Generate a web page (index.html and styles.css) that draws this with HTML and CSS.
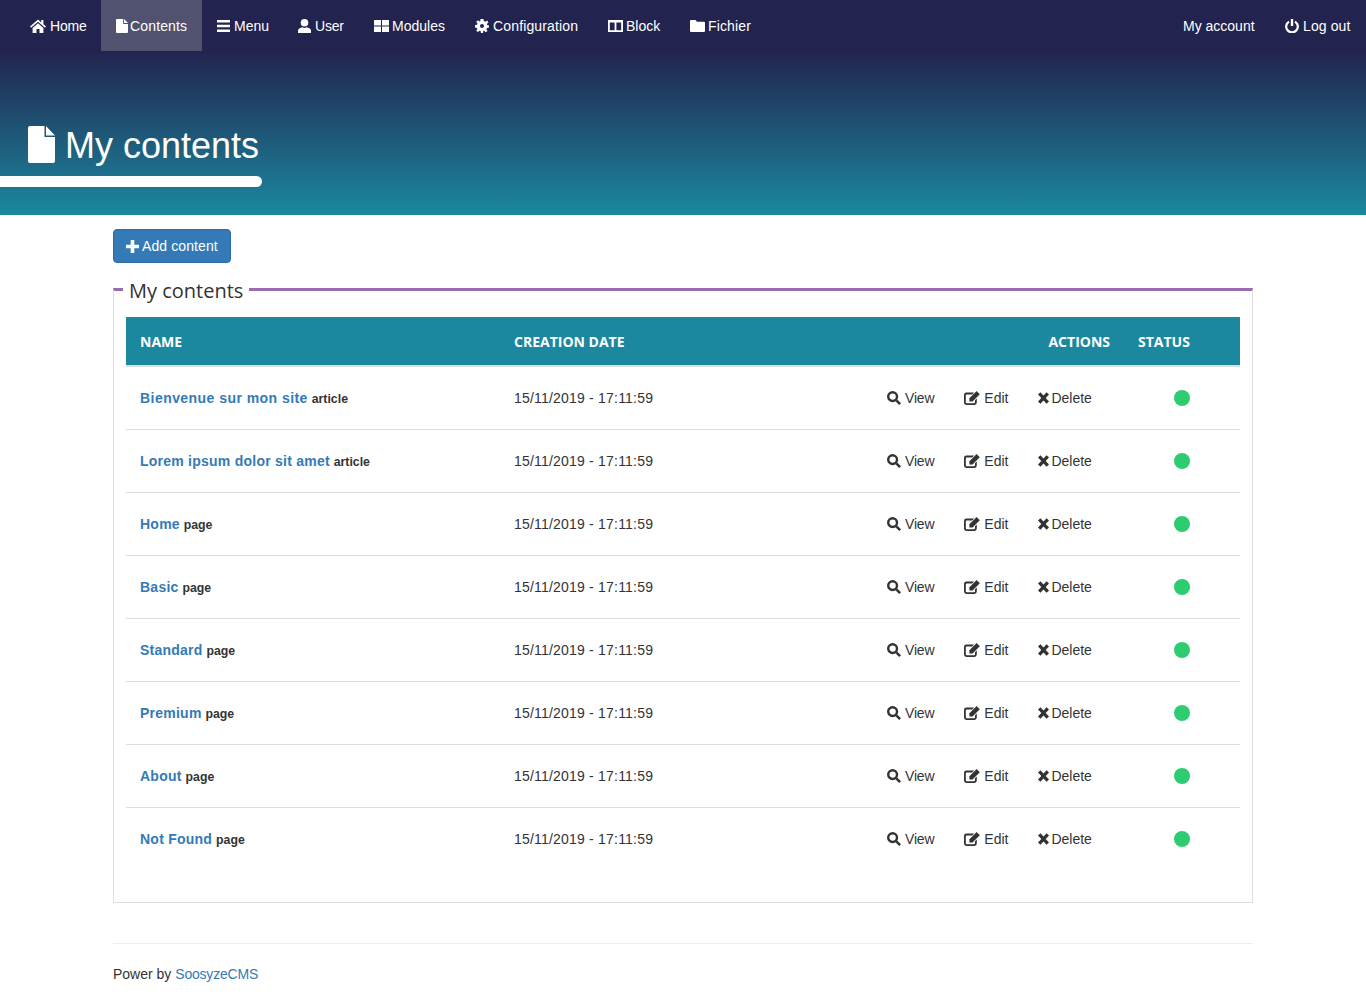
FILE: index.html
```html
<!DOCTYPE html>
<html lang="en">
<head>
    <meta charset="UTF-8">
    <meta name="viewport" content="width=device-width, initial-scale=1.0">
    <title>My contents</title>
    <link rel="stylesheet" href="styles.css">
</head>
<body>
    <svg class="sprite" xmlns="http://www.w3.org/2000/svg">
        <symbol id="i-home" viewBox="0 0 16 14"><path d="M8 0.6 L0 7.6 L1 8.8 L8 2.8 L15 8.8 L16 7.6 L13.4 5.3 V1 H11.2 V3.4 Z M8 4.2 L2.6 8.9 V14 H6.5 V10 H9.5 V14 H13.4 V8.9 Z"/></symbol>
        <symbol id="i-file" viewBox="0 0 12 14"><path d="M1 0 H7.2 V5 H12 V13 Q12 14 11 14 H1 Q0 14 0 13 V1 Q0 0 1 0 Z M8 0 L12 4 H8 Z"/></symbol>
        <symbol id="i-file-lg" viewBox="0 0 27 37"><path d="M2 0 H16.5 V11 H27 V35 Q27 37 25 37 H2 Q0 37 0 35 V2 Q0 0 2 0 Z M18 0 L27 9.5 H18 Z"/></symbol>
        <symbol id="i-menu" viewBox="0 0 13 14"><path d="M0 1 H13 V3.4 H0 Z M0 5.8 H13 V8.2 H0 Z M0 10.6 H13 V13 H0 Z"/></symbol>
        <symbol id="i-user" viewBox="0 0 13 14"><circle cx="6.5" cy="3.8" r="3.8"/><path d="M0 14 V11.4 Q0 9.4 2.2 8.9 L4.2 8.2 Q6.5 9.6 8.8 8.2 L10.8 8.9 Q13 9.4 13 11.4 V14 Z"/></symbol>
        <symbol id="i-modules" viewBox="0 0 15 14"><path d="M0 1 H7 V6.5 H0 Z M8 1 H15 V6.5 H8 Z M0 7.5 H7 V13 H0 Z M8 7.5 H15 V13 H8 Z"/></symbol>
        <symbol id="i-cog" viewBox="0 0 14 14"><path fill-rule="evenodd" d="M5.6 0 H8.4 L8.8 2 L10.4 2.7 L12.1 1.6 L13.4 3.6 L11.8 4.9 L12.1 6 L14 6.4 V8.4 L12 8.9 L11.4 10.3 L12.5 12 L10.6 13.2 L9.2 11.8 L8.2 12.1 L8 14 H6 L5.6 12.1 L4.4 11.7 L3 13.1 L1.2 11.8 L2.4 10.3 L1.9 8.9 L0 8.4 V6.2 L1.9 5.8 L2.5 4.5 L1.2 3 L3 1.3 L4.6 2.4 L5.3 2 Z M7 5 A2 2 0 1 0 7 9 A2 2 0 1 0 7 5 Z"/></symbol>
        <symbol id="i-block" viewBox="0 0 15 14"><path fill-rule="evenodd" d="M0 1 H15 V13 H0 Z M1.8 3.4 V11.2 H6.6 V3.4 Z M8.4 3.4 V11.2 H13.2 V3.4 Z"/></symbol>
        <symbol id="i-folder" viewBox="0 0 15 14"><path d="M1 1 H5.5 L7 2.8 H14 Q15 2.8 15 3.8 V12 Q15 13 14 13 H1 Q0 13 0 12 V2 Q0 1 1 1 Z"/></symbol>
        <symbol id="i-power" viewBox="0 0 14 14"><path d="M5.8 0 H8.2 V7 H5.8 Z"/><path fill="none" stroke="currentColor" stroke-width="2.2" d="M4 2.6 A5.8 5.8 0 1 0 10 2.6"/></symbol>
        <symbol id="i-plus" viewBox="0 0 13 13"><path d="M4.7 0 H8.3 V4.7 H13 V8.3 H8.3 V13 H4.7 V8.3 H0 V4.7 H4.7 Z"/></symbol>
        <symbol id="i-search" viewBox="0 0 14 14"><circle cx="5.6" cy="5.6" r="4.4" fill="none" stroke="currentColor" stroke-width="2.4"/><path d="M8.4 10.2 L10.2 8.4 L14 12.2 L12.2 14 Z"/></symbol>
        <symbol id="i-edit" viewBox="0 0 16 14"><path d="M2.4 1.6 H10 L8.2 3.4 H2.8 Q1.8 3.4 1.8 4.4 V11.2 Q1.8 12.2 2.8 12.2 H10 Q11 12.2 11 11.2 V9.2 L12.8 7.4 V11.6 Q12.8 14 10.4 14 H2.4 Q0 14 0 11.6 V4 Q0 1.6 2.4 1.6 Z"/><path d="M12.6 0 L15.8 3.2 L8.6 10.4 H5.4 V7.2 Z"/></symbol>
        <symbol id="i-remove" viewBox="0 0 11 14"><path d="M0 3.6 L2.4 1.2 L5.5 4.6 L8.6 1.2 L11 3.6 L7.7 7 L11 10.4 L8.6 12.8 L5.5 9.4 L2.4 12.8 L0 10.4 L3.3 7 Z"/></symbol>
    </svg>

    <header class="site-header">
        <nav class="navbar">
            <ul class="nav-list">
                <li class="nav-home"><a href="#"><svg class="icon icon-home"><use href="#i-home"/></svg>Home</a></li>
                <li class="nav-contents active"><a href="#"><svg class="icon icon-file"><use href="#i-file"/></svg>Contents</a></li>
                <li class="nav-menu"><a href="#"><svg class="icon icon-narrow"><use href="#i-menu"/></svg>Menu</a></li>
                <li class="nav-user"><a href="#"><svg class="icon icon-narrow"><use href="#i-user"/></svg>User</a></li>
                <li class="nav-modules"><a href="#"><svg class="icon icon-wide"><use href="#i-modules"/></svg>Modules</a></li>
                <li class="nav-config"><a href="#"><svg class="icon"><use href="#i-cog"/></svg>Configuration</a></li>
                <li class="nav-block"><a href="#"><svg class="icon icon-wide"><use href="#i-block"/></svg>Block</a></li>
                <li class="nav-fichier"><a href="#"><svg class="icon icon-wide"><use href="#i-folder"/></svg>Fichier</a></li>
            </ul>
            <ul class="nav-list">
                <li class="nav-account"><a href="#">My account</a></li>
                <li class="nav-logout"><a href="#"><svg class="icon"><use href="#i-power"/></svg>Log out</a></li>
            </ul>
        </nav>
        <div class="page-title">
            <h1><svg class="title-icon"><use href="#i-file-lg"/></svg>My contents</h1>
            <div class="title-bar"></div>
        </div>
    </header>

    <main class="container">
        <a class="btn-add" href="#"><svg class="icon icon-plus"><use href="#i-plus"/></svg>Add content</a>

        <fieldset class="panel">
            <legend>My contents</legend>
            <table class="content-table">
                <colgroup>
                    <col class="col-name">
                    <col class="col-date">
                    <col class="col-actions">
                    <col class="col-status">
                </colgroup>
                <thead>
                    <tr>
                        <th>NAME</th>
                        <th>CREATION DATE</th>
                        <th class="th-actions">ACTIONS</th>
                        <th>STATUS</th>
                    </tr>
                </thead>
                <tbody>
                    <tr>
                        <td><a class="title-link title-wide" href="#">Bienvenue sur mon site</a> <small>article</small></td>
                        <td class="td-date">15/11/2019 - 17:11:59</td>
                        <td>
                            <div class="actions">
                                <a href="#"><svg class="icon"><use href="#i-search"/></svg>View</a>
                                <a href="#"><svg class="icon icon-edit"><use href="#i-edit"/></svg>Edit</a>
                                <a href="#"><svg class="icon icon-x"><use href="#i-remove"/></svg>Delete</a>
                            </div>
                        </td>
                        <td class="td-status"><span class="dot"></span></td>
                    </tr>
                    <tr>
                        <td><a class="title-link" href="#">Lorem ipsum dolor sit amet</a> <small>article</small></td>
                        <td class="td-date">15/11/2019 - 17:11:59</td>
                        <td>
                            <div class="actions">
                                <a href="#"><svg class="icon"><use href="#i-search"/></svg>View</a>
                                <a href="#"><svg class="icon icon-edit"><use href="#i-edit"/></svg>Edit</a>
                                <a href="#"><svg class="icon icon-x"><use href="#i-remove"/></svg>Delete</a>
                            </div>
                        </td>
                        <td class="td-status"><span class="dot"></span></td>
                    </tr>
                    <tr>
                        <td><a class="title-link" href="#">Home</a> <small>page</small></td>
                        <td class="td-date">15/11/2019 - 17:11:59</td>
                        <td>
                            <div class="actions">
                                <a href="#"><svg class="icon"><use href="#i-search"/></svg>View</a>
                                <a href="#"><svg class="icon icon-edit"><use href="#i-edit"/></svg>Edit</a>
                                <a href="#"><svg class="icon icon-x"><use href="#i-remove"/></svg>Delete</a>
                            </div>
                        </td>
                        <td class="td-status"><span class="dot"></span></td>
                    </tr>
                    <tr>
                        <td><a class="title-link" href="#">Basic</a> <small>page</small></td>
                        <td class="td-date">15/11/2019 - 17:11:59</td>
                        <td>
                            <div class="actions">
                                <a href="#"><svg class="icon"><use href="#i-search"/></svg>View</a>
                                <a href="#"><svg class="icon icon-edit"><use href="#i-edit"/></svg>Edit</a>
                                <a href="#"><svg class="icon icon-x"><use href="#i-remove"/></svg>Delete</a>
                            </div>
                        </td>
                        <td class="td-status"><span class="dot"></span></td>
                    </tr>
                    <tr>
                        <td><a class="title-link" href="#">Standard</a> <small>page</small></td>
                        <td class="td-date">15/11/2019 - 17:11:59</td>
                        <td>
                            <div class="actions">
                                <a href="#"><svg class="icon"><use href="#i-search"/></svg>View</a>
                                <a href="#"><svg class="icon icon-edit"><use href="#i-edit"/></svg>Edit</a>
                                <a href="#"><svg class="icon icon-x"><use href="#i-remove"/></svg>Delete</a>
                            </div>
                        </td>
                        <td class="td-status"><span class="dot"></span></td>
                    </tr>
                    <tr>
                        <td><a class="title-link" href="#">Premium</a> <small>page</small></td>
                        <td class="td-date">15/11/2019 - 17:11:59</td>
                        <td>
                            <div class="actions">
                                <a href="#"><svg class="icon"><use href="#i-search"/></svg>View</a>
                                <a href="#"><svg class="icon icon-edit"><use href="#i-edit"/></svg>Edit</a>
                                <a href="#"><svg class="icon icon-x"><use href="#i-remove"/></svg>Delete</a>
                            </div>
                        </td>
                        <td class="td-status"><span class="dot"></span></td>
                    </tr>
                    <tr>
                        <td><a class="title-link" href="#">About</a> <small>page</small></td>
                        <td class="td-date">15/11/2019 - 17:11:59</td>
                        <td>
                            <div class="actions">
                                <a href="#"><svg class="icon"><use href="#i-search"/></svg>View</a>
                                <a href="#"><svg class="icon icon-edit"><use href="#i-edit"/></svg>Edit</a>
                                <a href="#"><svg class="icon icon-x"><use href="#i-remove"/></svg>Delete</a>
                            </div>
                        </td>
                        <td class="td-status"><span class="dot"></span></td>
                    </tr>
                    <tr>
                        <td><a class="title-link" href="#">Not Found</a> <small>page</small></td>
                        <td class="td-date">15/11/2019 - 17:11:59</td>
                        <td>
                            <div class="actions">
                                <a href="#"><svg class="icon"><use href="#i-search"/></svg>View</a>
                                <a href="#"><svg class="icon icon-edit"><use href="#i-edit"/></svg>Edit</a>
                                <a href="#"><svg class="icon icon-x"><use href="#i-remove"/></svg>Delete</a>
                            </div>
                        </td>
                        <td class="td-status"><span class="dot"></span></td>
                    </tr>
                </tbody>
            </table>
        </fieldset>

        <footer class="site-footer">
            Power by <a class="footer-link" href="#">SoosyzeCMS</a>
        </footer>
    </main>
</body>
</html>
```

FILE: styles.css
```css
* {
    box-sizing: border-box;
}
body {
    margin: 0;
    font-family: "Liberation Sans", Arial, sans-serif;
    font-size: 14px;
    line-height: 20px;
    color: #333;
    background-color: #fff;
}
a {
    text-decoration: none;
    color: #337ab7;
}
.sprite {
    display: none;
}
.icon {
    display: inline-block;
    width: 14px;
    height: 14px;
    margin-right: 4px;
    fill: currentColor;
    vertical-align: -2px;
}
.icon-home,
.icon-edit {
    width: 16px;
}
.icon-file {
    width: 12px;
    margin-right: 2px;
}
.icon-narrow {
    width: 13px;
}
.icon-wide {
    width: 15px;
    margin-right: 3px;
}
.icon-x {
    width: 11px;
    margin-right: 3px;
}
.icon-plus {
    width: 13px;
    height: 13px;
    margin-right: 3px;
}

/* header */
.site-header {
    height: 215px;
    background: linear-gradient(to bottom, #22244f 0, #22244f 51px, #1b889f 100%);
}
.navbar {
    display: flex;
    justify-content: space-between;
    padding-left: 15px;
    height: 51px;
}
.nav-list {
    display: flex;
    margin: 0;
    padding: 0;
    list-style: none;
}
.nav-list a {
    display: block;
    height: 51px;
    padding: 16px 0 15px 15px;
    white-space: nowrap;
    color: #fff;
}
.nav-list .active a {
    background-color: #50526f;
}
.nav-home { width: 86px; letter-spacing: -0.2px; }
.nav-contents { width: 101px; letter-spacing: 0.15px; }
.nav-menu { width: 81px; }
.nav-user { width: 76px; letter-spacing: -0.2px; }
.nav-modules { width: 101px; }
.nav-config { width: 133px; letter-spacing: 0.15px; }
.nav-block { width: 82px; }
.nav-fichier { width: 91px; letter-spacing: 0.15px; }
.nav-account { width: 102px; }
.nav-logout { width: 96px; letter-spacing: 0.1px; }

.page-title {
    padding-top: 70px;
}
.page-title h1 {
    margin: 0;
    padding-left: 28px;
    height: 55px;
    font-size: 36px;
    font-weight: 500;
    line-height: 50px;
    color: #fff;
}
.title-icon {
    width: 27px;
    height: 37px;
    margin-right: 10px;
    fill: #fff;
    vertical-align: -5px;
}
.title-bar {
    width: 262px;
    height: 11px;
    background-color: #fff;
    border-radius: 0 6px 6px 0;
}

/* main */
.container {
    width: 1140px;
    margin: 14px auto 0;
}
.btn-add {
    display: inline-block;
    width: 118px;
    height: 34px;
    padding: 6px 12px;
    letter-spacing: 0.1px;
    color: #fff;
    background-color: #337ab7;
    border: 1px solid #2e6da4;
    border-radius: 4px;
}
.btn-add .icon {
    vertical-align: -1.5px;
}
.panel {
    margin: 12px 0 0;
    padding: 13px 12px 0;
    height: 628px;
    min-width: 0;
    border: 1px solid #ddd;
    border-top: 3px solid #9b6bb0;
}
.panel legend {
    margin-left: -3px;
    padding: 2px 6px 0;
    font-family: "Open Sans", sans-serif;
    font-size: 20px;
    line-height: 27px;
    color: #333;
}

/* table */
.content-table {
    width: 100%;
    table-layout: fixed;
    border-collapse: separate;
    border-spacing: 0;
}
.col-name {
    width: 374px;
}
.col-date {
    width: 373px;
}
.col-status {
    width: 116px;
}
.content-table th {
    height: 50px;
    padding: 2px 14px 0;
    text-align: left;
    font-family: "Open Sans", sans-serif;
    font-size: 14px;
    font-weight: 700;
    color: #fff;
    background-color: #1b889f;
    border-bottom: 2px solid #ddd;
}
.content-table .th-actions {
    text-align: right;
}
.content-table td {
    height: 63px;
    padding: 0 14px;
    border-bottom: 1px solid #ddd;
}
.content-table tr:last-child td {
    border-bottom-color: transparent;
}
.title-link {
    font-weight: 700;
    letter-spacing: 0.24px;
}
.title-wide {
    letter-spacing: 0.45px;
}
.content-table small {
    font-size: 12.3px;
    font-weight: 700;
}
.td-date {
    letter-spacing: 0.2px;
}
.actions {
    display: flex;
    gap: 30px;
}
.actions a {
    color: #333;
}
.actions a:first-child {
    letter-spacing: -0.2px;
}
.actions .icon-x {
    margin-right: 2px;
}
.td-status {
    text-align: center;
}
.dot {
    display: block;
    width: 16px;
    height: 16px;
    margin: 0 auto;
    background-color: #2ecc71;
    border-radius: 50%;
}

/* footer */
.site-footer {
    margin-top: 40px;
    padding: 20px 0 10px;
    border-top: 1px solid #eee;
}
.footer-link {
    letter-spacing: -0.2px;
}
```
